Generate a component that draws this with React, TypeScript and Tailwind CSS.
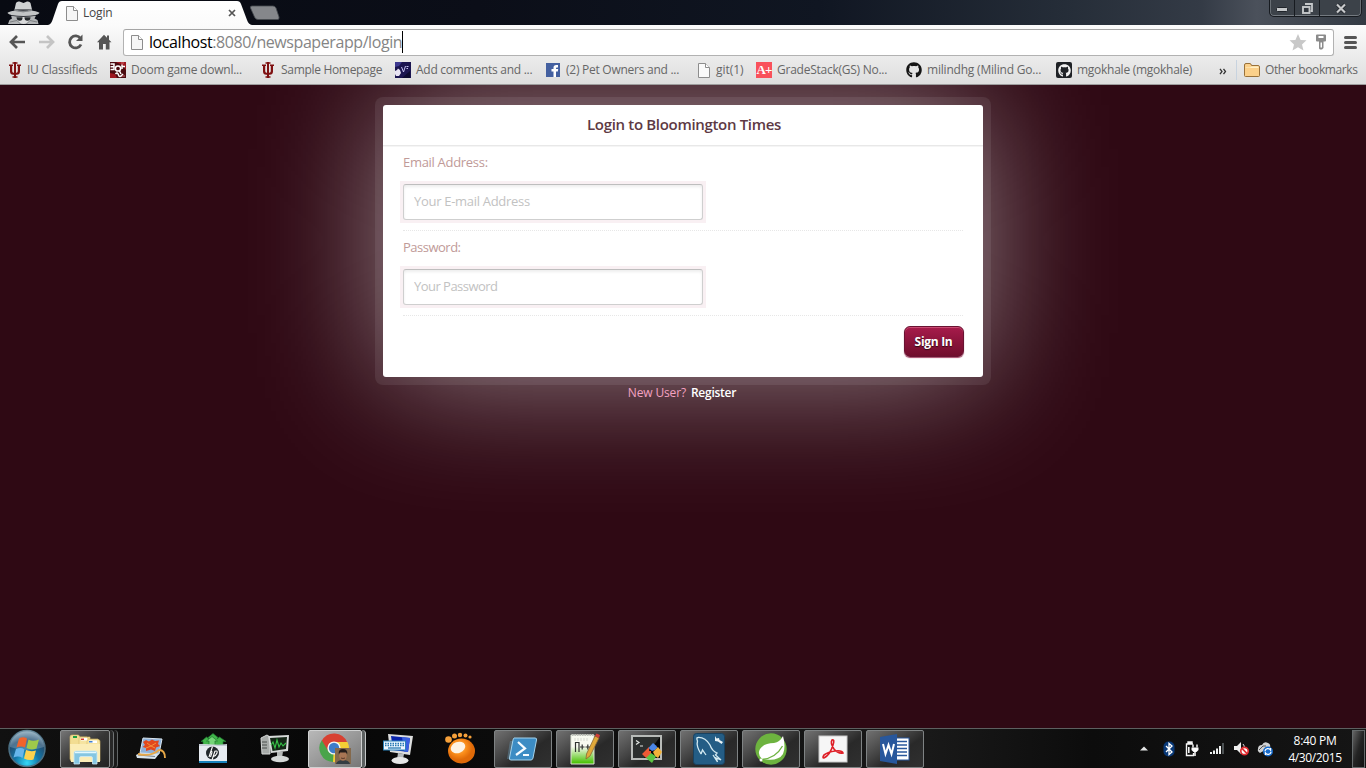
import React from "react";
import { FaGithub } from "react-icons/fa";

const ui = "font-['Open_Sans','Noto_Sans',sans-serif]";

function PageIcon({ dim = false }: { dim?: boolean }) {
  return (
    <svg width="12" height="15" viewBox="0 0 12 15" className="shrink-0">
      <path d="M.5.5H7.5L11.5 4.5V14.5H.5Z" fill={dim ? "#fafafa" : "#f6f6f6"} stroke="#8d8d8d" />
      <path d="M7.5.5V4.5H11.5" fill="#fff" stroke="#8d8d8d" />
    </svg>
  );
}

function IUIcon() {
  return (
    <svg width="16" height="16" viewBox="0 0 16 16" className="shrink-0">
      <g fill="#7f1112">
        <path d="M7 0H9V16H7Z" />
        <path d="M5.500 .3H10.500V1.800H5.500ZM5.500 14.200H10.500V15.800H5.500Z" />
        <path d="M2 2.500H6V4H5.200V9Q5.200 10.700 6.500 10.700H9.500Q10.800 10.700 10.800 9V4H10V2.500H14V4H13V9.500Q12.800 12.700 9.800 12.700H6.200Q3.200 12.700 3 9.500V4H2Z" />
      </g>
    </svg>
  );
}

function DoomIcon() {
  return (
    <svg width="16" height="16" viewBox="0 0 16 16" className="shrink-0">
      <rect width="16" height="16" fill="#4b0b10" />
      <path d="M6 0H16V8L12 3ZM0 11L5 12L7 16H0Z" fill="#9d1720" />
      <g fill="none" stroke="#fff" strokeWidth="1.500">
        <path d="M.5 2H4V7.500H.5M.5 4.800H4" />
        <circle cx="8" cy="6.500" r="2.600" />
        <path d="M12 2.500V7M12 4.500H15M9.500 9L11 12M5.500 12Q7.500 9.500 8.500 13T13 12" />
      </g>
      <path d="M11 1H14M12 14H15" stroke="#d1666a" />
    </svg>
  );
}

function NightIcon() {
  return (
    <svg width="16" height="16" viewBox="0 0 16 16" className="shrink-0">
      <rect width="16" height="16" fill="#1b1550" />
      <path d="M0 0H7L4 4L0 5Z" fill="#3e3a90" />
      <path d="M0 9L2 8L3 6.500L5 8L6 11L4 14L1 14L0 12Z" fill="#e8e4f3" />
      <path d="M6.500 5L8.500 10L10.500 4M11.500 4.500H13.500M11.500 6.500H13" fill="none" stroke="#c4c0f0" strokeWidth="1" />
      <path d="M7 16L15 9V16Z" fill="#0c0a30" />
    </svg>
  );
}

function FacebookIcon() {
  return (
    <svg width="14" height="14" viewBox="0 0 14 14" className="shrink-0">
      <rect width="14" height="14" fill="#4460a0" />
      <path d="M7.5 14V8.5H5.5V6H7.5V4.6Q7.5 2 10.2 2H12V4.4H10.8Q10 4.4 10 5.2V6H12.2L11.8 8.5H10V14Z" fill="#fff" />
    </svg>
  );
}

function GradeIcon() {
  return (
    <span className="flex h-4 w-4 shrink-0 items-center justify-center bg-[#f9515b] font-['Liberation_Serif',serif] text-[13px] leading-4 font-bold tracking-[-1px] text-white">
      A+
    </span>
  );
}

type Bookmark = { label: string; icon: React.ReactNode; cell: string; track: string };

const bookmarks: Bookmark[] = [
  { label: "IU Classifieds", icon: <IUIcon />, cell: "w-[103px] gap-1", track: "tracking-[-0.25px]" },
  { label: "Doom game downl...", icon: <DoomIcon />, cell: "w-[150px] gap-[5px]", track: "tracking-[-0.24px]" },
  { label: "Sample Homepage", icon: <IUIcon />, cell: "w-[135px] gap-[5px]", track: "tracking-[-0.31px]" },
  { label: "Add comments and ...", icon: <NightIcon />, cell: "w-[151px] gap-[5px]", track: "tracking-[-0.27px]" },
  { label: "(2) Pet Owners and ...", icon: <FacebookIcon />, cell: "w-[152px] gap-1.5", track: "tracking-[-0.26px]" },
  { label: "git(1)", icon: <PageIcon dim />, cell: "w-[58px] gap-1.5", track: "tracking-[-0.05px]" },
  { label: "GradeStack(GS) No...", icon: <GradeIcon />, cell: "w-[150px] gap-[5px]", track: "tracking-[-0.25px]" },
  {
    label: "milindhg (Milind Go...",
    icon: <FaGithub size={16} color="#151515" className="shrink-0" />,
    cell: "w-[150px] gap-[5px]",
    track: "tracking-[-0.2px]",
  },
  {
    label: "mgokhale (mgokhale)",
    icon: (
      <span className="flex h-4 w-4 shrink-0 items-center justify-center rounded-[2px] bg-[#1f2226]">
        <FaGithub size={13} color="#f2f2f2" />
      </span>
    ),
    cell: "w-[163px] gap-[5px]",
    track: "tracking-[-0.26px]",
  },
];

function TitleBar() {
  return (
    <div className="flex h-[25px] items-start bg-[linear-gradient(90deg,#080a12_0%,#0b0e18_35%,#101622_60%,#252d38_78%,#343b46_88%,#4b515b_92%,#333a43_100%)]">
      <svg width="33" height="24" viewBox="0 0 33 24" className="ml-[7px] shrink-0">
        <path d="M7.500 9.500L9 3Q10 1 12.500 1.500L16.500 3L20 1.500Q22.500 1 23.500 3L25 9.500Z" fill="#cfd1d2" />
        <path d="M7.500 9Q16 12 25 9L25.400 11.500Q16 14 7.100 11.500Z" fill="#85888b" />
        <path d="M7 10.800Q16 13.500 25.500 10.800Q32.500 12 32.500 13Q31 16 16.500 16T.5 13Q.5 12 7 10.800Z" fill="#c3c5c6" />
        <path d="M4 15.800Q16 17.500 29 15.800L27.500 18.500L30.500 20L31.500 24H1L2.500 20L5 18.500Z" fill="#b2b4b6" />
        <path d="M10 17H23L22 22L16.500 24L11 22Z" fill="#d9dadb" />
        <path d="M9.500 17.200H15.500Q15.800 20.800 12.800 20.800T9.500 17.200ZM17.500 17.200H23.500Q23.400 20.800 20.400 20.800T17.500 17.200Z" fill="#25282b" />
        <path d="M3 22L10 20.500L13.500 24M30 22L23 20.500L19.500 24" fill="none" stroke="#7d8082" />
      </svg>
      <div className="relative ml-[8px] h-[25px] w-[206px] shrink-0">
        <svg width="206" height="25" viewBox="0 0 206 25" className="absolute inset-0">
          <defs>
            <linearGradient id="tab" x1="0" y1="0" x2="0" y2="1">
              <stop offset="0" stopColor="#fff" />
              <stop offset="1" stopColor="#fbfbfb" />
            </linearGradient>
          </defs>
          <path d="M0 25Q3 24.500 4.500 20L10 4Q11 1 14 1H189Q192 1 193 4L199 20Q200.500 24.500 204 25Z" fill="url(#tab)" />
        </svg>
        <div className="relative flex h-[25px] items-center pt-px pl-[18px]">
          <PageIcon />
          <span className={`${ui} ml-[5px] text-[12px] leading-4 tracking-[-0.2px] text-[#454545]`}>Login</span>
          <svg width="8" height="8" viewBox="0 0 8 8" className="mr-[18px] ml-auto">
            <path d="M1 1L7 7M7 1L1 7" stroke="#555" strokeWidth="1.700" />
          </svg>
        </div>
      </div>
      <svg width="32" height="16" viewBox="0 0 32 16" className="mt-[5px] -ml-[5px] shrink-0">
        <path d="M3 1H24Q26 1 27 3L30 12Q30.500 14.500 28.500 14.500H9Q6.500 14.500 5.500 12L1.500 3Q1 1 3 1Z" fill="#85878b" stroke="#484b51" strokeWidth=".8" />
      </svg>
      <div className="mr-[4px] ml-auto flex h-[17px] w-[93px] shrink-0 rounded-b-[5px] border border-t-0 border-[#171b20] bg-[#3c4249] shadow-[inset_0_-1px_0_#747a80,inset_1px_0_0_#686e74,inset_-1px_0_0_#686e74]">
        <div className="flex w-[25px] items-center justify-center border-r border-[#171b20]">
          <svg width="12" height="6" viewBox="0 0 12 6" className="mt-1">
            <rect x=".5" y=".5" width="11" height="4" rx="1" fill="#c5c8ca" stroke="#20242a" />
          </svg>
        </div>
        <div className="flex w-[25px] items-center justify-center border-r border-[#171b20]">
          <svg width="13" height="13" viewBox="0 0 13 13">
            <path d="M4 2H11V9H9.500" fill="none" stroke="#c5c8ca" strokeWidth="1.800" />
            <rect x="2" y="5" width="6.500" height="6" fill="#32383f" stroke="#c5c8ca" strokeWidth="1.900" />
          </svg>
        </div>
        <div className="flex flex-1 items-center justify-center">
          <svg width="12" height="11" viewBox="0 0 12 11">
            <path d="M2 1.500L10 9.500M10 1.500L2 9.500" stroke="#20242a" strokeWidth="3.800" />
            <path d="M2 1.500L10 9.500M10 1.500L2 9.500" stroke="#c8cacc" strokeWidth="2.200" />
          </svg>
        </div>
      </div>
    </div>
  );
}

function Toolbar() {
  return (
    <div className="flex h-[34px] items-center">
      <svg width="17" height="14" viewBox="0 0 17 14" className="ml-[9px] shrink-0">
        <path d="M8 1L2 7L8 13M2.500 7H16" fill="none" stroke="#555" strokeWidth="2.700" />
      </svg>
      <svg width="17" height="14" viewBox="0 0 17 14" className="ml-[12px] shrink-0">
        <path d="M9 1L15 7L9 13M14.500 7H1" fill="none" stroke="#c4c4c4" strokeWidth="2.700" />
      </svg>
      <svg width="17" height="16" viewBox="0 0 17 16" className="ml-[12px] shrink-0">
        <path d="M13.500 4.500A6 6 0 1 0 14 10.500" fill="none" stroke="#555" strokeWidth="2.800" />
        <path d="M15.500 .5V7H9Z" fill="#555" />
      </svg>
      <svg width="16" height="16" viewBox="0 0 16 16" className="ml-[13px] shrink-0">
        <path d="M7 .8L10 3.800V1.500H12V5.800L14.500 8.300H12.500V15.500H8.800V10H6V15.500H2V8.300H0Z" fill="#555" />
      </svg>
      <div className="ml-[10px] flex h-[27px] w-[1211px] shrink-0 items-center rounded-[3px] border border-[#b2b2b2] border-t-[#a5a5a5] bg-white pl-[7px]">
        <PageIcon />
        <span className={`${ui} ml-[6px] text-[16px] leading-6 tracking-[-0.42px] whitespace-nowrap text-[#858585]`}>
          <span className="text-black">localhost</span>:8080/newspaperapp/login
        </span>
        <span className="h-[22px] w-px bg-black" />
        <svg width="18" height="17" viewBox="0 0 18 17" className="mr-[9px] ml-auto">
          <path d="M9 0L11.600 5.900L17.500 6.300L13 10.400L14.500 16.500L9 13.300L3.500 16.500L5 10.400L.5 6.300L6.400 5.900Z" fill="#c8c8c8" />
        </svg>
        <svg width="10" height="16" viewBox="0 0 10 16" className="mr-[7px]">
          <path d="M1 .5H9Q10 .5 10 1.500V6.500Q10 7.500 9 7.500H7.500V14L6 15.500H4L3 14.500V7.500H1Q0 7.500 0 6.500V1.500Q0 .5 1 .5Z" fill="#8b8b8b" />
          <path d="M2.500 2H7.500V4H2.500ZM4.500 8.500H6V13.500H4.500Z" fill="#fff" />
        </svg>
      </div>
      <div className="ml-[10px] flex w-[13px] flex-col gap-[2px]">
        <span className="h-[3px] rounded-sm bg-[#555]" />
        <span className="h-[3px] rounded-sm bg-[#555]" />
        <span className="h-[3px] rounded-sm bg-[#555]" />
      </div>
    </div>
  );
}

function BookmarksBar() {
  return (
    <div className={`${ui} flex h-[25px] items-center pb-[3px] pl-[7px] text-[12px] leading-4 whitespace-nowrap text-[#676767]`}>
      {bookmarks.map((b) => (
        <div key={b.label} className={`flex shrink-0 items-center ${b.cell}`}>
          {b.icon}
          <span className={b.track}>{b.label}</span>
        </div>
      ))}
      <svg width="8" height="7" viewBox="0 0 8 7" className="mt-[2px] mr-[10px] shrink-0">
        <path d="M1 .8L3 3.500L1 6.200M4.500 .8L6.500 3.500L4.500 6.200" fill="none" stroke="#333" strokeWidth="1.300" />
      </svg>
      <span className="-ml-px h-[20px] w-px bg-[#c8d3df]" />
      <svg width="16" height="14" viewBox="0 0 16 14" className="ml-[7px] shrink-0">
        <path d="M.5 12.500V2Q.5 .5 2 .5H6Q7 .5 7.500 2.500H14Q15.500 2.500 15.500 4V12.500Q15.500 13.500 14.500 13.500H1.500Q.5 13.500 .5 12.500Z" fill="#fbd08a" stroke="#99713a" />
        <path d="M1.500 5H14.500V3.500H7.500L6 4.500H1.500Z" fill="#fff0c5" />
      </svg>
      <span className="ml-[5px] tracking-[-0.4px]">Other bookmarks</span>
    </div>
  );
}

function Field({ label, hint, type, labelTrack, hintTrack }: { label: string; hint: string; type: string; labelTrack: string; hintTrack: string }) {
  return (
    <div className="flex h-[85px] flex-col items-start border-b border-dotted border-[#e7e7e7] pt-[7px]">
      <label className={`text-[13px] leading-[18px] text-[#c09a98] ${labelTrack}`}>{label}</label>
      <div className="mt-[10px] -ml-[3px] bg-[#f9f0f3] p-[3px]">
        <input
          type={type}
          placeholder={hint}
          className={`block h-[36px] w-[300px] rounded-[3px] border border-[#cfcfcf] border-t-[#bebebe] bg-white px-[10px] pb-[2px] text-[13px] shadow-[inset_0_2px_3px_rgba(0,0,0,0.07)] placeholder:text-[#c2c2c2] ${hintTrack}`}
        />
      </div>
    </div>
  );
}

function LoginPage() {
  return (
    <main className={`${ui} isolate flex min-h-0 flex-1 flex-col items-center overflow-hidden bg-[#2f0914] pt-[12px]`}>
      <div className="relative rounded-[8px] bg-white/[0.08] p-[8px]">
        <div className="absolute inset-[8px] -z-10 bg-white/50 blur-[66px]" />
        <section className="relative h-[272px] w-[600px] rounded-[3px] bg-white">
          <h1 className="flex h-[41px] items-center justify-center border-b border-[#e8e8e8] pb-[2px] pl-[2px] text-[15px] font-semibold tracking-[-0.32px] text-[#5e3944] shadow-[0_1px_0_#f5f5f5]">
            Login to Bloomington Times
          </h1>
          <form className="flex flex-col px-[20px]" onSubmit={(e) => e.preventDefault()}>
            <Field label="Email Address:" hint="Your E-mail Address" type="text" labelTrack="tracking-[-0.3px]" hintTrack="tracking-[-0.3px]" />
            <Field label="Password:" hint="Your Password" type="password" labelTrack="tracking-[-0.5px]" hintTrack="tracking-[-0.53px]" />
            <button
              type="submit"
              className="mt-[10px] -mr-px h-[31px] w-[60px] self-end rounded-[6px] border border-[#691332] bg-linear-to-b from-[#a71b4b] to-[#710e2d] pr-[1px] text-[12px] font-bold tracking-[-0.3px] whitespace-nowrap text-white shadow-[0_1px_1px_#a84c6b,inset_0_1px_0_#c94a72] [text-shadow:0_1px_1px_#2f0914]"
            >
              Sign In
            </button>
          </form>
        </section>
      </div>
      <p className="relative -mt-px flex h-[18px] items-center gap-[5px] pr-[2px] text-[12px] leading-[18px] text-[#f4a2c2]">
        <span className="font-medium tracking-[-0.15px]">New User?</span>
        <a className="font-semibold tracking-[-0.25px] text-white">Register</a>
      </p>
    </main>
  );
}

function Orb() {
  return (
    <svg width="40" height="40" viewBox="0 0 40 40" className="ml-[7px] shrink-0">
      <defs>
        <radialGradient id="orb" cx=".5" cy=".9" r=".85">
          <stop offset="0" stopColor="#35d8f8" />
          <stop offset=".4" stopColor="#1277a8" />
          <stop offset=".75" stopColor="#244d70" />
          <stop offset="1" stopColor="#84a2b5" />
        </radialGradient>
      </defs>
      <circle cx="20" cy="19.500" r="18" fill="url(#orb)" stroke="#4c7084" strokeWidth="1.500" />
      <path d="M3 18A17 17 0 0 1 37 18Q20 24 3 18Z" fill="#bdd3df" opacity=".28" />
      <path d="M12 9.500Q16 7 20 9.500L18 18.500Q14 16.500 9.500 18.500Z" fill="#f0642c" />
      <path d="M21.500 10.500Q26 13 32 10.500L29.500 19.500Q24 21.500 19.500 19Z" fill="#9fc94a" />
      <path d="M9 20Q14 18 17.500 20.500L15.500 29Q11.500 26.500 6.500 28.500Z" fill="#66b6eb" />
      <path d="M19 21Q24 23 29 21.500L26.500 30.500Q22 32 17 29.500Z" fill="#fcd24e" />
    </svg>
  );
}

function ExplorerIcon() {
  return (
    <svg width="34" height="32" viewBox="0 0 34 32">
      <path d="M2 26V4Q2 2 4 2H10Q11 2 12 4H22V28H3Z" fill="#f2dd92" stroke="#d9bd6c" strokeWidth=".6" />
      <path d="M5 3H9V5H5Z" fill="#1fa142" />
      <path d="M11 28V6Q11 4 13 4H19L21 6H30V28Z" fill="#f6e4a0" stroke="#d9bd6c" strokeWidth=".6" />
      <path d="M13 5H19V7.500H13Z" fill="#fff" />
      <path d="M13 5.500H16V7H13Z" fill="#d43b31" />
      <path d="M19 28V8.500Q19 6.500 21 6.500H30Q32 6.500 32 8.500V28Z" fill="#f6e4a0" stroke="#d9bd6c" strokeWidth=".6" />
      <path d="M21 7.500H29V10H21Z" fill="#fff" />
      <path d="M21 8H24.500V9.500H21Z" fill="#3f7fd0" />
      <path d="M2 11H32V29H3Z" fill="#fbedb6" />
      <path d="M6 31V20Q6 18 8 18H27Q29 18 29 20V31H24.500V25Q24.500 23.500 23 23.500H13Q11.500 23.500 11.500 25V31Z" fill="#85c6e2" stroke="#cdebf6" strokeWidth=".8" />
      <path d="M7 19.500H28" stroke="#e2f8ff" strokeWidth="1.500" />
    </svg>
  );
}

function PhotoIcon() {
  return (
    <svg width="32" height="26" viewBox="0 0 32 26">
      <path d="M8 2L27 3L24 18L5 17Z" fill="#8eb2db" stroke="#d9e6f0" />
      <path d="M8 6L11 4L14 5.500L17 3.500L20 5L24 4.500L23 8L25 10L21 11.500L20 15L16 13.500L11 15L11 12L7.500 11L10 9Z" fill="#e2481d" />
      <path d="M12 7L16 10L21 7M11 12L16 10L20 12" fill="none" stroke="#f69139" strokeWidth="1" />
      <path d="M1 19L5 17L24 18L20 23L2 22Z" fill="#dae5ec" />
      <path d="M3 19L20 20.500" stroke="#777f89" />
      <path d="M3 18Q16 21 24 14Q30 14 30 22" fill="none" stroke="#e8a847" strokeWidth="1.800" />
    </svg>
  );
}

function HpIcon() {
  return (
    <svg width="30" height="31" viewBox="0 0 30 31">
      <path d="M5 12V8.500H3L8.500 4L11 6L10 4.500L15 .5L20 4.500L19 6L21.500 4L28 8.500H25V12Z" fill="#42b64b" stroke="#1f7730" strokeWidth=".7" />
      <path d="M11 12V8H8.500L14 3.500L19.500 8H17V12Z" fill="#74d578" stroke="#1f7730" strokeWidth=".7" />
      <path d="M1 11L29 12V29H1Z" fill="#e7ecf2" />
      <path d="M1 11L15 12.500L29 11V13H1Z" fill="#c2cbd5" />
      <rect x="1" y="28" width="28" height="2" fill="#1882bb" />
      <circle cx="14.500" cy="20" r="6.500" fill="#22282c" />
      <path d="M14.500 13.500L11 24M12.300 19Q14.500 17.500 13.800 20L12.500 24M17 18L14 27M16.800 18.200Q20 17.200 19 20T15.300 23.500" fill="none" stroke="#fff" strokeWidth="1.100" />
    </svg>
  );
}

function MonitorIcon() {
  return (
    <svg width="32" height="30" viewBox="0 0 32 30">
      <path d="M2 4L8 1L11 3V20L3 20Z" fill="#a7aba9" stroke="#d5d8d7" />
      <path d="M3 8H8M3 11H8M3 14H8" stroke="#4a4e4d" />
      <path d="M9 2L30 1L29 17L12 19Z" fill="#d7dad9" />
      <path d="M11 4L28 3L27 15L13.500 17Z" fill="#142616" />
      <path d="M12 11L14 8L16 14L18 6L20 13L22 9L24 12L27 9" fill="none" stroke="#36c348" strokeWidth="1.100" />
      <path d="M18 18L24 17.500L23 24H18Z" fill="#b5b8b7" />
      <ellipse cx="21" cy="25" rx="9" ry="3.300" fill="#d5d8d7" />
    </svg>
  );
}

function ChromeIcon() {
  return (
    <svg width="32" height="34" viewBox="0 0 32 34">
      <path d="M15 15L2.900 8A14 14 0 0 0 14 30L20 18Z" fill="#4aa44b" />
      <path d="M15 15L14 30A14 14 0 0 0 28.500 10H16Z" fill="#f4ce35" />
      <path d="M15 15L8.900 18.500L2.900 8.500A14 14 0 0 1 28 10H15Z" fill="#d84132" />
      <circle cx="15" cy="16" r="6.600" fill="#f4f6f7" />
      <circle cx="15" cy="16" r="5.200" fill="#3d7dc9" />
      <rect x="16" y="16" width="16" height="16" fill="#84694c" />
      <path d="M17 32Q18 28 24 28T31 32Z" fill="#333d42" />
      <ellipse cx="24" cy="23.500" rx="3.800" ry="5.200" fill="#a87654" />
      <path d="M19.800 22.500Q19 17 24 17T28.200 22.500L27 20.500H21Z" fill="#251e1b" />
      <path d="M22 26Q24 27 26 26" fill="none" stroke="#5a3b2a" />
    </svg>
  );
}

function KeyboardMonitorIcon() {
  return (
    <svg width="32" height="32" viewBox="0 0 32 32">
      <path d="M6 1L31 3L28 22L8 19Z" fill="#dddede" />
      <path d="M9 3L28 5L26 19L11 17Z" fill="#0a25ac" />
      <path d="M20 4L28 5L26 19L22 18.500Z" fill="#3a5fe0" />
      <path d="M16 20L22 21L21 26H15Z" fill="#b7bbbd" />
      <ellipse cx="18" cy="27.500" rx="8.500" ry="3.500" fill="#e6e7e7" />
      <rect x="1.500" y="8" width="22" height="9" fill="#eef7ff" stroke="#2b82ba" />
      <path d="M3 10.500H22M3 12.500H22" stroke="#2779b2" strokeWidth="1.300" strokeDasharray="1.500 1" />
      <path d="M6 15H19" stroke="#2779b2" strokeWidth="1.300" />
    </svg>
  );
}

function PawIcon() {
  return (
    <svg width="32" height="33" viewBox="0 0 32 33">
      <defs>
        <radialGradient id="ball" cx=".4" cy=".35">
          <stop offset="0" stopColor="#ffc164" />
          <stop offset=".6" stopColor="#f98b19" />
          <stop offset="1" stopColor="#e06a08" />
        </radialGradient>
      </defs>
      <ellipse cx="17.500" cy="19" rx="13.500" ry="12.500" fill="url(#ball)" />
      <g fill="#f5a03a">
        <circle cx="4.500" cy="7.500" r="3.300" />
        <circle cx="10.500" cy="4" r="2.500" />
        <circle cx="16" cy="3" r="2.200" />
        <circle cx="21.500" cy="3.500" r="2" />
        <circle cx="26" cy="5" r="1.600" />
      </g>
      <ellipse cx="14" cy="15.500" rx="7.500" ry="5.500" fill="#fdf3e4" transform="rotate(-20 14 15.500)" />
    </svg>
  );
}

function ShellIcon() {
  return (
    <svg width="32" height="28" viewBox="0 0 32 28">
      <path d="M3 6H8L4 24H0Z" fill="#77bde5" opacity=".3" />
      <path d="M7 3H28Q30 3 29.500 5L26 23Q25.500 25 24 25H4Q2 25 2.500 23L6 5Q6.500 3 7 3Z" fill="#3c8cc4" stroke="#a4d2eb" />
      <path d="M11 7L18 13.500L9 20M16 20H22" fill="none" stroke="#f6fbff" strokeWidth="2.200" />
    </svg>
  );
}

function NotepadIcon() {
  return (
    <svg width="32" height="34" viewBox="0 0 32 34">
      <defs>
        <linearGradient id="note" x1="0" y1="0" x2="0" y2="1">
          <stop offset=".4" stopColor="#f8faf0" />
          <stop offset=".95" stopColor="#4fc40c" />
        </linearGradient>
      </defs>
      <path d="M2 3H25V32H2Z" fill="url(#note)" stroke="#d9dfd1" />
      <path d="M3 3H25" stroke="#bcbfb8" strokeWidth="2" strokeDasharray="1.500 1" />
      <path d="M6 6V9M9 6V9M12 6V9M15 6V9M18 6V9" stroke="#d5d8d0" strokeWidth="1" />
      <path d="M6.500 20V10.500H10V20M11 15H15.500M13.200 12.500V17.500M16.500 15H21M18.800 12.500V17.500" fill="none" stroke="#303330" strokeWidth="1.200" />
      <path d="M26 4L30 6L21 24L17 27L17.500 22Z" fill="#e0a93a" stroke="#8c6733" strokeWidth=".8" />
      <path d="M26 4L27.500 1.500L31 3L30 6Z" fill="#cf3f38" />
    </svg>
  );
}

function PuttyIcon() {
  return (
    <svg width="32" height="30" viewBox="0 0 32 30">
      <rect x="1" y="2" width="29" height="23" fill="#2c2f2e" stroke="#b8bbb8" strokeWidth="2" />
      <path d="M13 24L29 3V24Z" fill="#060606" />
      <path d="M5 6.500L8 8.500L5 10.500M9 12H12" fill="none" stroke="#e2e6e2" strokeWidth="1.200" />
      <path d="M11 20L18 13V17H20V22L15 24Z" fill="#ee5a35" />
      <path d="M21 17L17.500 14L22 9L25 11.500L26.500 13.500L24 16Z" fill="#4b86e6" />
      <path d="M22 18L27 13L31 18L27 24L24 22Z" fill="#f2b23a" />
      <path d="M15 24L20 19L25 22.500L21 29Z" fill="#5cc544" />
    </svg>
  );
}

function WorkbenchIcon() {
  return (
    <svg width="32" height="32" viewBox="0 0 32 32">
      <rect x=".5" y=".5" width="31" height="31" rx="3" fill="#245d85" stroke="#194260" />
      <path d="M8 21Q3 13 4.500 8Q3 4.500 5 4.500Q12 4 17 12Q19 18 24 20L22.500 22L28 27L23 25L24.500 29L20 22M8 21L9.500 17L13 22" fill="none" stroke="#d4eaf1" strokeWidth="1.300" />
      <path d="M22 3L23.500 5.500L26 5L26.500 7L30 9L28.500 11L25 8.500L22 8Z" fill="#e8f2f5" />
    </svg>
  );
}

function LeafIcon() {
  return (
    <svg width="34" height="34" viewBox="0 0 34 34">
      <circle cx="17" cy="17" r="15.700" fill="#6db33f" />
      <path d="M29 4Q32 15 29 22Q24 30 8 27Q3 22 6 17Q10 11 20 11Q26 10 29 4Z" fill="#fff" />
      <path d="M8 27.500Q22 26 28.500 14" fill="none" stroke="#6db33f" strokeWidth="1.300" />
      <circle cx="7" cy="28" r="1.500" fill="#fff" />
    </svg>
  );
}

function PdfIcon() {
  return (
    <svg width="30" height="28" viewBox="0 0 30 28">
      <rect x="1" y="1" width="28" height="26" fill="#f6f6f6" stroke="#c9c9c9" />
      <path d="M6 23Q12 20 15 10Q17 4 14 5Q12 8 16 14Q20 19 25 18Q24 15 17 16Q10 17 6 20Q4 23 6 23" fill="none" stroke="#df1e26" strokeWidth="1.600" />
    </svg>
  );
}

function WordIcon() {
  return (
    <svg width="32" height="30" viewBox="0 0 32 30">
      <rect x="16" y="4" width="14" height="22" fill="#fff" stroke="#28579c" />
      <path d="M18 7.500H28M18 11H28M18 14.500H28M18 18H28M18 21.500H28" stroke="#28579c" strokeWidth="1.300" />
      <path d="M1 3L18 0V30L1 27Z" fill="#28579c" />
      <path d="M4 10L6.500 20L9.500 11L12.500 20L15 10" fill="none" stroke="#fff" strokeWidth="2" />
    </svg>
  );
}

const windows = [ShellIcon, NotepadIcon, PuttyIcon, WorkbenchIcon, LeafIcon, PdfIcon, WordIcon];

function Taskbar() {
  return (
    <footer className="flex h-[40px] shrink-0 items-center overflow-hidden border-t border-[#5d6060] bg-[linear-gradient(90deg,#111_0%,#070707_25%,#101010_50%,#191919_68%,#0c0c0c_80%,#151515_100%)]">
      <Orb />
      <div className="ml-[13px] flex h-[38px] w-[50px] items-center justify-center rounded-[2px] border border-[#8c8f90] bg-linear-to-br from-[#767676] via-[#363636] to-[#222]">
        <ExplorerIcon />
      </div>
      <div className="h-[38px] w-[4px] rounded-r-sm border-r border-[#707475] bg-[#282828]" />
      <div className="h-[38px] w-[4px] rounded-r-sm border-r border-[#606465] bg-[#1a1a1a]" />
      <div className="ml-[17px] flex w-[32px] justify-center"><PhotoIcon /></div>
      <div className="ml-[31px] flex w-[30px] justify-center"><HpIcon /></div>
      <div className="ml-[31px] flex w-[32px] justify-center"><MonitorIcon /></div>
      <div className="ml-[17px] flex h-[38px] w-[54px] items-center justify-center rounded-[2px] border border-[#d0d1d1] bg-linear-to-br from-[#b8b8b8] via-[#999] to-[#777]">
        <ChromeIcon />
      </div>
      <div className="h-[38px] w-[4px] rounded-r-sm border-r border-[#c4c7c8] bg-[#5c6060]" />
      <div className="ml-[16px] flex w-[32px] justify-center"><KeyboardMonitorIcon /></div>
      <div className="ml-[30px] flex w-[32px] justify-center"><PawIcon /></div>
      <div className="ml-[18px] flex gap-1">
        {windows.map((Icon, i) => (
          <div key={i} className="flex h-[38px] w-[58px] items-center justify-center rounded-[2px] border border-[#7f8384] bg-[linear-gradient(145deg,#717171_0%,#454545_38%,#292929_60%,#303030_100%)]">
            <Icon />
          </div>
        ))}
      </div>
      <div className="ml-auto flex h-full items-center">
        <svg width="8" height="5" viewBox="0 0 8 5"><path d="M0 4.500L4 .5L8 4.500Z" fill="#e3e5e5" /></svg>
        <svg width="12" height="16" viewBox="0 0 12 16" className="ml-[15px]">
          <rect x=".5" y=".5" width="11" height="15" rx="5" fill="#083877" />
          <path d="M3 5L9 11L6 13.500V2.500L9 5L3 11" fill="none" stroke="#fff" strokeWidth="1.300" />
        </svg>
        <svg width="14" height="16" viewBox="0 0 14 16" className="ml-[10px]">
          <path d="M3 2H7V1H3ZM8 3H1.500V14.500H8.500V12" fill="none" stroke="#f6f6f6" strokeWidth="1.400" />
          <path d="M8 3.500V6.500M12 3.500V6.500" stroke="#fff" strokeWidth="1.400" />
          <path d="M6.500 6.500H13.500V9L11.500 11H8.500L6.500 9Z" fill="#fff" />
          <path d="M10 11V15M3.800 6V12" stroke="#fff" strokeWidth="1.500" />
        </svg>
        <svg width="15" height="12" viewBox="0 0 15 12" className="ml-[11px]">
          <path d="M1 9V11M4 7.500V11M7 5.500V11M10 3V11" stroke="#eef0f0" strokeWidth="2" />
          <path d="M13 0V11" stroke="#4c5153" strokeWidth="2" />
        </svg>
        <svg width="15" height="15" viewBox="0 0 15 15" className="ml-[9px]">
          <path d="M0 5H3L7 1V13L3 9H0Z" fill="#efefef" />
          <path d="M9 3Q11 5 10 7" fill="none" stroke="#ddd" />
          <circle cx="10.500" cy="10" r="3.700" fill="#fff" stroke="#e02c30" strokeWidth="1.700" />
          <path d="M7.700 7.200L13.300 12.800" stroke="#e02c30" strokeWidth="1.700" />
        </svg>
        <svg width="17" height="16" viewBox="0 0 17 16" className="ml-[8px]">
          <path d="M1 8Q1 4 5 4Q7 0 11 2Q14 3 13 7L8 9L3 12Q0 10 1 8Z" fill="#d1d2d3" />
          <path d="M2 9L6 5H9" fill="none" stroke="#555" />
          <circle cx="11" cy="10.500" r="5" fill="#176bcb" />
          <path d="M8 10A3 3 0 0 1 13.500 9V7M14 11A3 3 0 0 1 8.500 12V14" fill="none" stroke="#fff" strokeWidth="1.300" />
        </svg>
        <div className={`${ui} ml-[14px] flex w-[54px] flex-col items-center text-[12px] leading-[17px] tracking-[-0.4px] whitespace-nowrap text-white`}>
          <span className="tracking-[-0.3px]">8:40 PM</span>
          <span>4/30/2015</span>
        </div>
        <div className="mr-px ml-[10px] h-[38px] w-[13px] border border-[#656a6b] bg-linear-to-br from-[#656565] via-[#242424] to-[#111]" />
      </div>
    </footer>
  );
}

export default function App() {
  return (
    <div className="flex h-screen w-full flex-col overflow-hidden bg-[#2f0914]">
      <header className="relative z-10 shrink-0">
        <TitleBar />
        <div className="h-[60px] border-b border-[#9d9d9d] bg-linear-to-b from-[#fbfbfb] to-[#dedede]">
          <Toolbar />
          <BookmarksBar />
        </div>
      </header>
      <LoginPage />
      <Taskbar />
    </div>
  );
}
